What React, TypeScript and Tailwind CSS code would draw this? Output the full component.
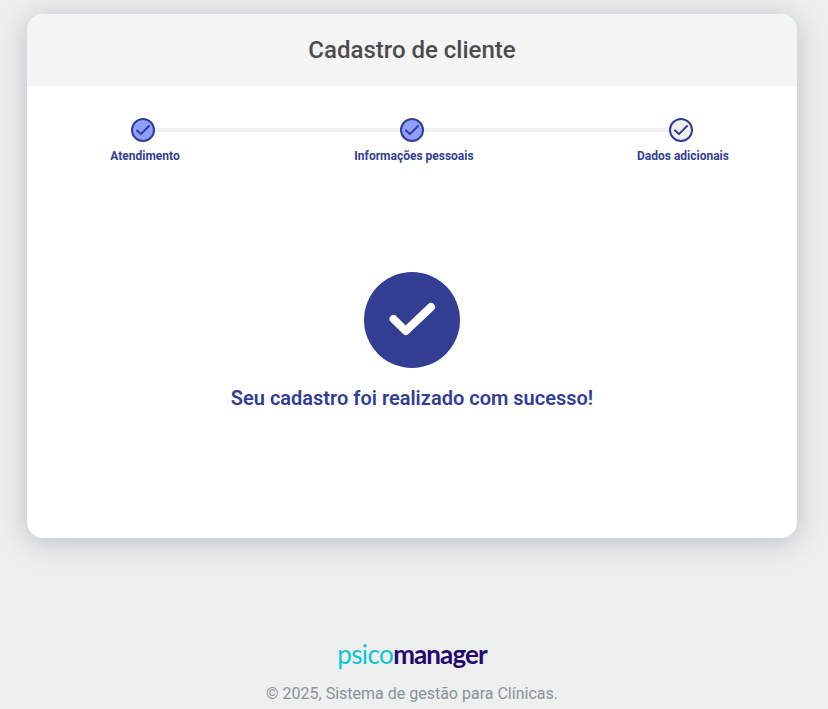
import React from "react";

function StepIcon({ filled }: { filled: boolean }) {
  return (
    <svg width="24" height="24" viewBox="0 0 24 24" className="shrink-0">
      <circle cx="12" cy="12" r="11" fill={filled ? "#8f9fff" : "#eef0f2"} stroke="#323e92" strokeWidth="2" />
      <path d="M6 12.5l4 3.6L18 8" fill="none" stroke="#323e92" strokeWidth="2" strokeLinecap="round" strokeLinejoin="round" />
    </svg>
  );
}

const labels = ["Atendimento", "Informações pessoais", "Dados adicionais"];

export default function App() {
  return (
    <div className="h-[709px] pr-1 bg-[#eef0ef] font-['Roboto',sans-serif] flex flex-col items-center overflow-hidden">
      {/* Card */}
      <div className="mt-[14px] w-[770px] h-[524px] shrink-0 rounded-2xl bg-white overflow-hidden shadow-[0_4px_30px_rgba(70,85,95,0.32)]">
        <div className="h-[72px] bg-[#f4f4f4] flex items-center justify-center">
          <h1 className="text-2xl font-medium text-[#4c4c4c]">Cadastro de cliente</h1>
        </div>

        {/* Stepper */}
        <div className="mt-8 px-[104px] flex items-center">
          <StepIcon filled />
          <div className="flex-1 h-1 bg-[#eef0f2]" />
          <StepIcon filled />
          <div className="flex-1 h-1 bg-[#eef0f2]" />
          <StepIcon filled={false} />
        </div>
        <div className="mt-[6px] pl-[48px] pr-[44px] flex justify-between">
          {labels.map((label) => (
            <span key={label} className="w-[140px] text-center text-xs leading-[16px] font-bold text-[#323e92]">
              {label}
            </span>
          ))}
        </div>

        {/* Success */}
        <div className="mt-[108px] flex flex-col items-center">
          <div className="w-24 h-24 rounded-full bg-[#323e92] flex items-center justify-center">
            <svg width="48" height="40" viewBox="0 0 48 40">
              <path d="M5.5 19l12.2 12L43 7" fill="none" stroke="#ffffff" strokeWidth="8" strokeLinecap="round" strokeLinejoin="round" />
            </svg>
          </div>
          <p className="mt-[16px] text-xl leading-[28px] font-semibold text-[#323e92]">Seu cadastro foi realizado com sucesso!</p>
        </div>
      </div>

      {/* Footer */}
      <div className="mt-[103px] flex items-baseline font-['Lato',sans-serif] text-[26px] leading-[26px] h-[26px]">
        <span className="text-[#0ac6d6] font-normal tracking-[-0.6px]">psico</span>
        <span className="text-[#24086e] font-bold tracking-[-0.9px]">manager</span>
      </div>
      <p className="mt-[15px] text-base leading-[24px] text-[#8a9299]">© 2025, Sistema de gestão para Clínicas.</p>
    </div>
  );
}
